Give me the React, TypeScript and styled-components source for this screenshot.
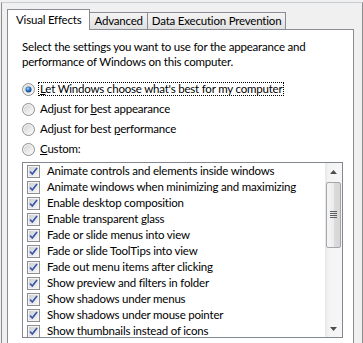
import React from "react";
import styled, { createGlobalStyle } from "styled-components";

const Global = createGlobalStyle`
  html, body {
    margin: 0;
    padding: 0;
    background: #f0f0f0;
    overflow: hidden;
  }
  body {
    font-family: "Segoe UI", Lato, "Liberation Sans", sans-serif;
    font-size: 11.5px;
    letter-spacing: -0.2px;
    color: #000;
  }
`;

const Frame = styled.div`
  box-sizing: border-box;
  width: 362px;
  height: 341px;
  margin: 2px 0 0 1px;
  padding: 6px 0 0 5px;
  border-top: 1px solid #c8ccd3;
  border-left: 1px solid #8c8c8c;
  border-right: 1px solid #8c8c8c;
  display: flex;
  flex-direction: column;
`;

const TabStrip = styled.div`
  display: flex;
  align-items: flex-end;
  height: 20px;
`;

const Tab = styled.div<{ $active?: boolean }>`
  box-sizing: border-box;
  height: ${(p) => (p.$active ? "21px" : "17px")};
  margin-bottom: ${(p) => (p.$active ? "-1px" : "0")};
  margin-left: ${(p) => (p.$active ? "0" : "-1px")};
  padding: ${(p) => (p.$active ? "2px 8px 0" : "0 4px")};
  border: 1px solid #898c95;
  border-bottom: none;
  background: ${(p) =>
    p.$active ? "#fff" : "linear-gradient(#f4f4f4, #ebebeb 50%, #e0e0e0)"};
  position: relative;
  z-index: ${(p) => (p.$active ? 2 : 1)};
  line-height: 15px;
  white-space: nowrap;
`;

const Panel = styled.div`
  box-sizing: border-box;
  width: 347px;
  flex: 1;
  background: #fff;
  border: 1px solid #898c95;
  border-bottom: none;
  padding: 9px 0 0 14px;
`;

const Intro = styled.p`
  margin: 0;
  line-height: 15px;
`;

const RadioGroup = styled.div`
  margin-top: 10px;
  display: flex;
  flex-direction: column;
`;

const RadioRow = styled.div`
  height: 20px;
  display: flex;
  align-items: center;
  gap: 3px;
`;

const Label = styled.span<{ $focus?: boolean }>`
  line-height: 12px;
  padding: 0 1px;
  border: 1px ${(p) => (p.$focus ? "dotted #000" : "solid transparent")};
`;

const ListBox = styled.div`
  box-sizing: border-box;
  margin-top: 3px;
  width: 321px;
  height: 176px;
  border: 1px solid #828790;
  display: flex;
  overflow: hidden;
`;

const Items = styled.div`
  flex: 1;
  padding-left: 4px;
  overflow: hidden;
`;

const ItemRow = styled.div`
  height: 16px;
  display: flex;
  align-items: center;
  gap: 5px;
  white-space: nowrap;
`;

const ScrollBar = styled.div`
  width: 17px;
  display: flex;
  flex-direction: column;
  background: linear-gradient(90deg, #e8e8e8, #f4f4f4 25%, #f6f6f6);
`;

const ArrowButton = styled.div`
  height: 17px;
  display: flex;
  align-items: center;
  justify-content: center;
`;

const Track = styled.div`
  flex: 1;
  padding: 2px 1px 0;
`;

const Thumb = styled.div`
  box-sizing: border-box;
  height: 66px;
  border: 1px solid #a2a5ab;
  border-radius: 2px;
  background: linear-gradient(90deg, #f6f6f6, #ececec 50%, #dcdcdc 51%, #d6d6d6);
  display: flex;
  align-items: center;
  justify-content: center;
`;

const Check = () => (
  <svg width="13" height="13" viewBox="0 0 13 13">
    <defs>
      <linearGradient id="cbg" x1="0" y1="0" x2="1" y2="1">
        <stop offset="0" stopColor="#cbcfd5" />
        <stop offset="1" stopColor="#f6f6f6" />
      </linearGradient>
    </defs>
    <rect x="0.5" y="0.5" width="12" height="12" fill="#f4f4f4" stroke="#8f8f8f" />
    <rect x="2" y="2" width="9" height="9" fill="url(#cbg)" />
    <path d="M3 6.5 L5.3 9 L10 3" fill="none" stroke="#3a56a8" strokeWidth="1.7" />
  </svg>
);

const Radio = ({ on }: { on?: boolean }) => (
  <svg width="13" height="13" viewBox="0 0 13 13">
    <defs>
      <linearGradient id="rbg" x1="0" y1="0" x2="1" y2="1">
        <stop offset="0" stopColor="#d4d4d4" />
        <stop offset="1" stopColor="#fafafa" />
      </linearGradient>
      <radialGradient id="rdot" cx="0.4" cy="0.35" r="0.7">
        <stop offset="0" stopColor="#a8d4f7" />
        <stop offset="0.5" stopColor="#2a72c7" />
        <stop offset="1" stopColor="#0d3a7a" />
      </radialGradient>
    </defs>
    <circle cx="6.5" cy="6.5" r="6" fill="#f2f2f2" stroke="#8e8f8f" />
    <circle cx="6.5" cy="6.5" r="4.5" fill="url(#rbg)" />
    {on && <circle cx="6.5" cy="6.5" r="3" fill="url(#rdot)" />}
  </svg>
);

const Arrow = ({ down }: { down?: boolean }) => (
  <svg width="7" height="4" viewBox="0 0 7 4">
    <path d={down ? "M0 0 H7 L3.5 4 Z" : "M0 4 H7 L3.5 0 Z"} fill="#4d4d4d" />
  </svg>
);

const Grip = () => (
  <svg width="7" height="8" viewBox="0 0 7 8">
    {[0, 2, 4, 6].map((y) => (
      <rect key={y} x="0" y={y} width="7" height="1" fill="#5b5e63" />
    ))}
  </svg>
);

const effects = [
  "Animate controls and elements inside windows",
  "Animate windows when minimizing and maximizing",
  "Enable desktop composition",
  "Enable transparent glass",
  "Fade or slide menus into view",
  "Fade or slide ToolTips into view",
  "Fade out menu items after clicking",
  "Show preview and filters in folder",
  "Show shadows under menus",
  "Show shadows under mouse pointer",
  "Show thumbnails instead of icons",
];

export default function App() {
  return (
    <>
      <Global />
      <Frame>
        <TabStrip>
          <Tab $active>Visual Effects</Tab>
          <Tab>Advanced</Tab>
          <Tab>Data Execution Prevention</Tab>
        </TabStrip>
        <Panel>
          <Intro>
            Select the settings you want to use for the appearance and
            <br />
            performance of Windows on this computer.
          </Intro>
          <RadioGroup>
            <RadioRow>
              <Radio on />
              <Label $focus>
                <u>L</u>et Windows choose what's best for my computer
              </Label>
            </RadioRow>
            <RadioRow>
              <Radio />
              <Label>
                Adjust for <u>b</u>est appearance
              </Label>
            </RadioRow>
            <RadioRow>
              <Radio />
              <Label>
                Adjust for best <u>p</u>erformance
              </Label>
            </RadioRow>
            <RadioRow>
              <Radio />
              <Label>
                <u>C</u>ustom:
              </Label>
            </RadioRow>
          </RadioGroup>
          <ListBox>
            <Items>
              {effects.map((e) => (
                <ItemRow key={e}>
                  <Check />
                  <Label>{e}</Label>
                </ItemRow>
              ))}
            </Items>
            <ScrollBar>
              <ArrowButton>
                <Arrow />
              </ArrowButton>
              <Track>
                <Thumb>
                  <Grip />
                </Thumb>
              </Track>
              <ArrowButton>
                <Arrow down />
              </ArrowButton>
            </ScrollBar>
          </ListBox>
        </Panel>
      </Frame>
    </>
  );
}
